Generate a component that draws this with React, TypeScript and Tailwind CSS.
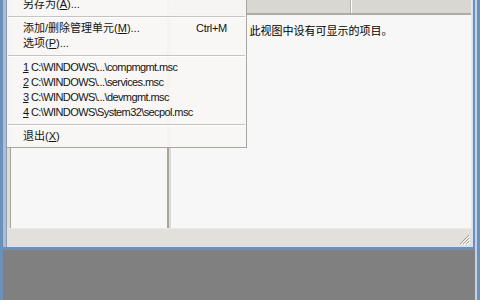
import React from 'react';

const FONT = "font-['Liberation_Sans','Noto_Sans_CJK_SC',sans-serif]";

function Sep() {
  return (
    <div className="h-[9px] flex items-center px-[1px]">
      <div className="w-full h-[2px] border-t border-[#c6c4c0] border-b border-b-white" />
    </div>
  );
}

function Item({ children, shortcut }: { children: React.ReactNode; shortcut?: string }) {
  return (
    <div className="h-[15px] flex items-center pl-[16px] pr-[19px] leading-[15px]">
      <span className="flex-1 whitespace-nowrap">{children}</span>
      {shortcut && <span className="whitespace-nowrap tracking-[-0.3px]">{shortcut}</span>}
    </div>
  );
}

const U = ({ c }: { c: string }) => <span className="underline underline-offset-[1px]">{c}</span>;

const recent = [
  ['1', 'C:\\WINDOWS\\...\\compmgmt.msc'],
  ['2', 'C:\\WINDOWS\\...\\services.msc'],
  ['3', 'C:\\WINDOWS\\...\\devmgmt.msc'],
  ['4', 'C:\\WINDOWS\\System32\\secpol.msc'],
];

export default function App() {
  return (
    <div className={`relative w-[480px] h-[300px] flex overflow-hidden bg-[#808080] text-[11px] text-[#141414] ${FONT}`}>
      {/* main window left border */}
      <div className="w-[3px] bg-[#6b91ba]" />

      <div className="flex-1 flex flex-col">
        {/* child window */}
        <div className="h-[250px] flex flex-col">
          <div className="flex-1 flex">
            <div className="w-[3px] bg-[#a9bed6]" />
            <div className="w-[1px] bg-[#8d9cae]" />

            <div className="flex-1 flex flex-col bg-[#dcdbd5]">
              <div className="flex-1 flex">
                {/* left pane */}
                <div className="w-[160px] flex pl-[3px]">
                  <div className="flex-1 bg-[#f7f7f7] border-l border-[#a8a69c]" />
                </div>
                {/* splitter */}
                <div className="w-[4px] flex">
                  <div className="w-[2px] bg-[#a8a69c]" />
                  <div className="w-[2px] bg-[#dcdbd5]" />
                </div>
                {/* right pane */}
                <div className="flex-1 flex flex-col bg-[#f7f7f7] border-r border-[#e8e8e8]">
                  <div className="h-[15px] flex bg-[#d8d7d1] border-b-2 border-[#aeaca4]">
                    <div className="w-[180px] border-r border-[#b5b3ab]" />
                    <div className="w-[1px] bg-white" />
                    <div className="flex-1" />
                  </div>
                  <div className="pt-[8px] text-center leading-[14px] font-['Noto_Sans_CJK_SC',sans-serif] text-[11px] text-black">
                    此视图中设有可显示的项目。
                  </div>
                </div>
              </div>

              {/* status bar */}
              <div className="h-[19px] flex justify-end items-end bg-[#e1e0da] border-t border-[#ecebe6] pr-[2px] pb-[2px]">
                <svg width="11" height="11" viewBox="0 0 11 11">
                  <path d="M10 1 L1 10 M10 4 L4 10 M10 7 L7 10" stroke="#a3a197" strokeWidth="1" />
                  <path d="M11 2 L2 11 M11 5 L5 11 M11 8 L8 11" stroke="#ffffff" strokeWidth="1" />
                </svg>
              </div>
            </div>

            <div className="w-[1px] bg-[#d9e2ec]" />
            <div className="w-[2px] bg-[#6b91ba]" />
          </div>
          <div className="h-[3px] bg-[#6b91ba]" />
        </div>

        {/* MMC workspace */}
        <div className="flex-1 bg-[#808080]" />
      </div>

      {/* main window right border */}
      <div className="w-[2px] bg-[#c3d1e0]" />
      <div className="w-[3px] bg-[#6b91ba]" />

      {/* file menu */}
      <div className="absolute left-[7px] top-[-3px] w-[240px] bg-[#f8f7f6]/95 border-r border-b border-[#a7a6a2] pb-[3px]">
        <Item>另存为(<U c="A" />)...</Item>
        <Sep />
        <Item shortcut="Ctrl+M">添加/删除管理单元(<U c="M" />)...</Item>
        <Item>选项(<U c="P" />)...</Item>
        <Sep />
        {recent.map(([n, p]) => (
          <Item key={n}>
            <span className="tracking-[-0.6px]">
              <U c={n} /> {p}
            </span>
          </Item>
        ))}
        <Sep />
        <Item>退出(<U c="X" />)</Item>
      </div>
    </div>
  );
}
